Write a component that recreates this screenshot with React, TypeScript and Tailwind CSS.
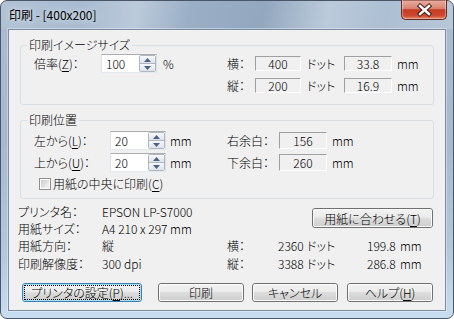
import React from "react";

const U = ({ children }: { children: React.ReactNode }) => (
  <span className="underline underline-offset-[2px] decoration-1">{children}</span>
);

function Spin({ value }: { value: string }) {
  return (
    <div className="w-[56px] h-[19px] shrink-0 flex bg-white border border-t-[#abadb3] border-l-[#e2e3ea] border-r-[#dbdfe6] border-b-[#e3e9ef]">
      <span className="flex-1 pl-[4px] leading-[17px]">{value}</span>
      <div className="w-[17px] flex flex-col border border-[#aeb6c1] rounded-[2px]">
        <div className="flex-1 flex items-center justify-center bg-[linear-gradient(180deg,#f7f8fa,#dfe3e9)] border-b border-[#aeb6c1]">
          <svg width="7" height="4" viewBox="0 0 7 4">
            <path d="M3.5 0L7 4H0Z" fill="#4a6288" />
          </svg>
        </div>
        <div className="flex-1 flex items-center justify-center bg-[linear-gradient(180deg,#f7f8fa,#dfe3e9)]">
          <svg width="7" height="4" viewBox="0 0 7 4">
            <path d="M0 0H7L3.5 4Z" fill="#4a6288" />
          </svg>
        </div>
      </div>
    </div>
  );
}

function Box({ value, className }: { value: string; className: string }) {
  return (
    <div
      className={`shrink-0 flex items-center justify-center bg-[#f0f0f0] border border-t-[#a0a0a0] border-l-[#a0a0a0] border-r-white border-b-white ${className}`}
    >
      {value}
    </div>
  );
}

function Btn({
  children,
  className,
  focused,
}: {
  children: React.ReactNode;
  className: string;
  focused?: boolean;
}) {
  return (
    <button
      className={`h-[19px] shrink-0 rounded-[3px] border p-0 ${
        focused ? "border-[#3c7fb1]" : "border-[#707070]"
      } ${className}`}
    >
      <div
        className={`h-full w-full rounded-[2px] border ${
          focused ? "border-[#a6e0f8]" : "border-[#fbfbfb]"
        } bg-[linear-gradient(180deg,#f2f2f2_0%,#ebebeb_45%,#dddddd_50%,#cfcfcf_100%)] flex items-center justify-center leading-[15px] whitespace-nowrap`}
      >
        {focused ? (
          <div className="h-full w-full border border-dotted border-black flex items-center justify-center leading-[13px]">
            {children}
          </div>
        ) : (
          children
        )}
      </div>
    </button>
  );
}

export default function App() {
  return (
    <div className="w-[454px] h-[319px] overflow-hidden bg-white">
      <div className="w-[454px] h-[319px] rounded-[7px] border border-[#4a5666] bg-[linear-gradient(180deg,#a9bcd1_0%,#a6b9cf_45%,#b3c7dd_80%,#c8ddf2_100%)] flex flex-col text-[12px] text-black font-light font-['Noto_Sans_CJK_JP','Noto_Sans',sans-serif] [font-feature-settings:'palt']">
        {/* Title bar */}
        <div className="h-[28px] shrink-0 flex items-start rounded-t-[6px] bg-[linear-gradient(100deg,rgba(255,255,255,0.1)_0%,rgba(255,255,255,0)_18%,rgba(255,255,255,0.22)_30%,rgba(70,95,130,0.15)_42%,rgba(60,85,120,0.2)_58%,rgba(255,255,255,0.22)_72%,rgba(255,255,255,0.05)_85%,rgba(255,255,255,0.18)_100%)]">
          <span className="ml-[8px] mt-[6px] leading-[16px] font-normal whitespace-nowrap [text-shadow:0_0_6px_rgba(255,255,255,0.9)]">
            印刷 - [400x200]
          </span>
          <div className="ml-auto mr-[6px] -mt-px w-[46px] h-[20px]">
            <svg width="46" height="20" viewBox="0 0 46 20">
              <defs>
                <linearGradient id="cg" x1="0" y1="0" x2="0" y2="1">
                  <stop offset="0" stopColor="#eab0a2" />
                  <stop offset="0.45" stopColor="#d98170" />
                  <stop offset="0.5" stopColor="#c53a22" />
                  <stop offset="0.8" stopColor="#cf4a30" />
                  <stop offset="1" stopColor="#e88a6c" />
                </linearGradient>
              </defs>
              <path
                d="M0.5 0V15.5Q0.5 19.5 4.5 19.5H41.5Q45.5 19.5 45.5 15.5V0Z"
                fill="url(#cg)"
                stroke="#5e2a22"
              />
              <path
                d="M1.5 0V15Q1.5 18.5 5 18.5H41Q44.5 18.5 44.5 15V0"
                fill="none"
                stroke="rgba(255,255,255,0.35)"
              />
              <g strokeLinecap="square">
                <path d="M19 6L28 14M28 6L19 14" stroke="#3d1d18" strokeWidth="4.4" />
                <path d="M19 6L28 14M28 6L19 14" stroke="#ffffff" strokeWidth="2.4" />
              </g>
            </svg>
          </div>
        </div>

        {/* Client area */}
        <div className="mx-[7px] h-[282px] shrink-0 border border-[#7d8ea1] bg-[#f0f0f0] flex flex-col shadow-[0_0_0_1px_rgba(255,255,255,0.35)]">
          {/* Group 1 */}
          <fieldset className="mx-[11px] mt-[7px] p-0 border border-[#d5dfe5] rounded-[3px]">
            <legend className="ml-[6px] px-[2px] leading-[16px] whitespace-nowrap">
              印刷イメージサイズ
            </legend>
            <div className="pl-[13px] pb-[9px] flex flex-col">
              <div className="mt-[1px] h-[19px] flex items-center whitespace-nowrap">
                <div className="w-[193px] shrink-0 flex items-center">
                  <span className="w-[67px] shrink-0">
                    倍率(<U>Z</U>)：
                  </span>
                  <Spin value="100" />
                  <span className="ml-[6px]">%</span>
                </div>
                <span className="w-[28px] shrink-0">横：</span>
                <Box value="400" className="w-[46px] h-[15px]" />
                <span className="ml-[6px] w-[37px] shrink-0">ドット</span>
                <Box value="33.8" className="w-[48px] h-[15px]" />
                <span className="ml-[5px]">mm</span>
              </div>
              <div className="mt-[3px] h-[19px] flex items-center whitespace-nowrap">
                <div className="w-[193px] shrink-0" />
                <span className="w-[28px] shrink-0">縦：</span>
                <Box value="200" className="w-[46px] h-[15px]" />
                <span className="ml-[6px] w-[37px] shrink-0">ドット</span>
                <Box value="16.9" className="w-[48px] h-[15px]" />
                <span className="ml-[5px]">mm</span>
              </div>
            </div>
          </fieldset>

          {/* Group 2 */}
          <fieldset className="mx-[11px] mt-[7px] p-0 border border-[#d5dfe5] rounded-[3px]">
            <legend className="ml-[6px] px-[2px] leading-[16px] whitespace-nowrap">印刷位置</legend>
            <div className="pl-[13px] pb-[6px] flex flex-col">
              <div className="mt-[3px] h-[19px] flex items-center whitespace-nowrap">
                <div className="w-[193px] shrink-0 flex items-center">
                  <span className="w-[76px] shrink-0">
                    左から(<U>L</U>)：
                  </span>
                  <Spin value="20" />
                  <span className="ml-[4px]">mm</span>
                </div>
                <span className="w-[52px] shrink-0">右余白：</span>
                <Box value="156" className="w-[48px] h-[17px]" />
                <span className="ml-[5px]">mm</span>
              </div>
              <div className="mt-[3px] h-[19px] flex items-center whitespace-nowrap">
                <div className="w-[193px] shrink-0 flex items-center">
                  <span className="w-[76px] shrink-0">
                    上から(<U>U</U>)：
                  </span>
                  <Spin value="20" />
                  <span className="ml-[4px]">mm</span>
                </div>
                <span className="w-[52px] shrink-0">下余白：</span>
                <Box value="260" className="w-[48px] h-[17px]" />
                <span className="ml-[5px]">mm</span>
              </div>
              <div className="mt-[4px] h-[16px] flex items-center whitespace-nowrap">
                <div className="ml-[5px] w-[12px] h-[12px] shrink-0 border border-[#8e8f8f] bg-white p-px">
                  <div className="w-full h-full bg-[linear-gradient(135deg,#cbcbcb,#f6f6f6)]" />
                </div>
                <span className="ml-[2px]">
                  用紙の中央に印刷(<U>C</U>)
                </span>
              </div>
            </div>
          </fieldset>

          {/* Info */}
          <div className="mt-[4px] pl-[9px] flex whitespace-nowrap">
            <div className="w-[209px] shrink-0 flex flex-col">
              <div className="h-[17px] flex items-center">
                <span className="w-[84px] shrink-0">プリンタ名：</span>
                <span>EPSON LP-S7000</span>
              </div>
              <div className="h-[17px] flex items-center">
                <span className="w-[84px] shrink-0">用紙サイズ：</span>
                <span>A4 210 x 297 mm</span>
              </div>
              <div className="h-[18px] flex items-center">
                <span className="w-[84px] shrink-0">用紙方向：</span>
                <span>縦</span>
              </div>
              <div className="h-[17px] flex items-center">
                <span className="w-[84px] shrink-0">印刷解像度：</span>
                <span>300 dpi</span>
              </div>
            </div>
            <div className="flex-1 flex flex-col">
              <div className="h-[34px] flex justify-end items-start pr-[12px]">
                <Btn className="mt-[5px] w-[121px] h-[20px]">
                  用紙に合わせる(<U>T</U>)
                </Btn>
              </div>
              <div className="h-[18px] flex items-center">
                <span className="w-[51px] shrink-0">横：</span>
                <span className="w-[29px] shrink-0">2360</span>
                <span className="w-[60px] shrink-0">ドット</span>
                <span className="w-[33px] shrink-0">199.8</span>
                <span>mm</span>
              </div>
              <div className="h-[17px] flex items-center">
                <span className="w-[51px] shrink-0">縦：</span>
                <span className="w-[29px] shrink-0">3388</span>
                <span className="w-[60px] shrink-0">ドット</span>
                <span className="w-[33px] shrink-0">286.8</span>
                <span>mm</span>
              </div>
            </div>
          </div>

          {/* Buttons */}
          <div className="mt-[11px] flex">
            <Btn focused className="ml-[13px] w-[120px]">
              プリンタの設定(<U>P</U>)...
            </Btn>
            <Btn className="ml-[16px] w-[86px]">印刷</Btn>
            <Btn className="ml-[8px] w-[86px]">キャンセル</Btn>
            <Btn className="ml-[9px] w-[86px]">
              ヘルプ(<U>H</U>)
            </Btn>
          </div>
        </div>
      </div>
    </div>
  );
}
